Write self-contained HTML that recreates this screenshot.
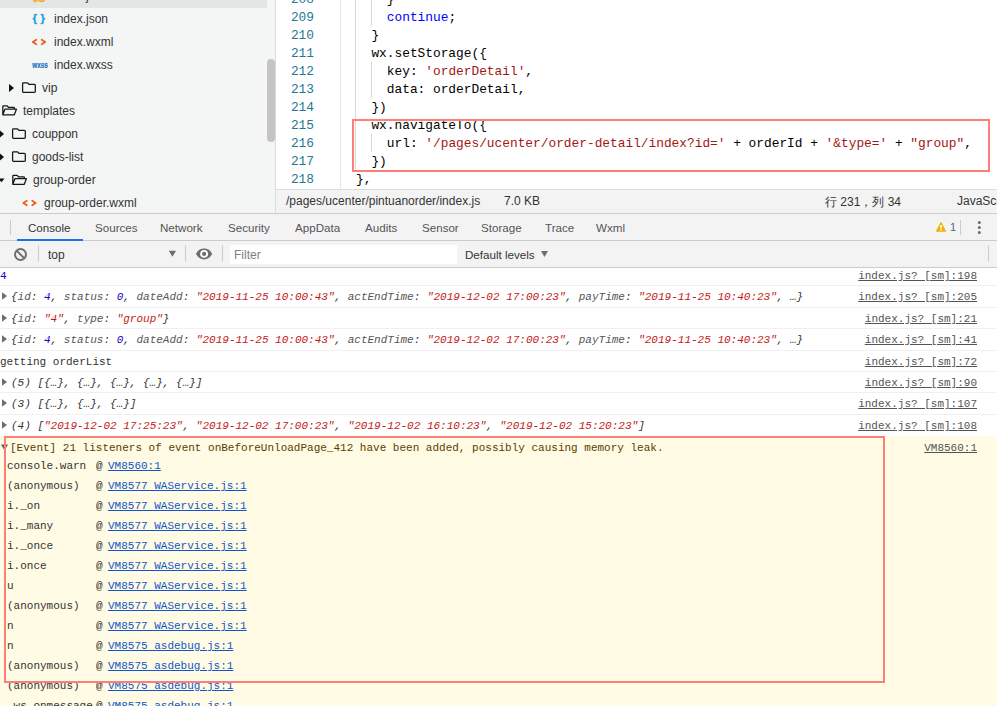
<!DOCTYPE html><html><head><meta charset="utf-8"><style>
*{margin:0;padding:0;box-sizing:border-box}
html,body{width:997px;height:706px;overflow:hidden;background:#fff;position:relative}
body{font-family:"Liberation Sans",sans-serif;font-size:12px;color:#333}
.a{position:absolute;white-space:pre}
#side{position:absolute;left:0;top:0;width:276px;height:213px;background:#f4f5f5;border-right:1px solid #dcdcdc;overflow:hidden}
#side .t{position:absolute;white-space:pre;font-size:12px;color:#333;line-height:14px}
#editor{position:absolute;left:276px;top:0;width:721px;height:189px;background:#fff;overflow:hidden}
.ln{position:absolute;left:0;width:38px;text-align:right;font-family:"Liberation Mono",monospace;font-size:12.83px;color:#237893;line-height:18px}
.cl{position:absolute;left:64.6px;font-family:"Liberation Mono",monospace;font-size:12.83px;color:#000;line-height:18px;white-space:pre}
.kw{color:#0000ff}.st{color:#a31515}
#info{position:absolute;left:276px;top:189px;width:721px;height:24px;background:#f3f3f3;border-top:1px solid #dcdcdc}
#tabs{position:absolute;left:0;top:213px;width:997px;height:28px;background:#f3f3f3;border-top:1px solid #ccc;border-bottom:1px solid #ccc}
#tabs .tb{position:absolute;top:7px;font-size:11.6px;color:#555;white-space:pre}
#tool{position:absolute;left:0;top:241px;width:997px;height:27px;background:#f3f3f3;border-bottom:1px solid #ccc}
#con{position:absolute;left:0;top:268px;width:997px;height:438px;background:#fff}
.row{position:absolute;left:0;width:997px;border-top:1px solid #f0f0f0}
.mono{font-family:"Liberation Mono",monospace;font-size:11px;line-height:13px;white-space:pre;position:absolute}
.lnk{color:#545454;text-decoration:underline}
.it{font-style:italic}
.s{color:#c41a16}.n{color:#1c00cf}.k{color:#565656}
.tri{position:absolute;width:0;height:0;border-left:5.2px solid #6e6e6e;border-top:4px solid transparent;border-bottom:4px solid transparent}
.trid{position:absolute;width:0;height:0;border-top:6px solid #5a5a5a;border-left:3.4px solid transparent;border-right:3.4px solid transparent}
#warn{position:absolute;left:0;top:436px;width:997px;height:270px;background:#fffbe5}
.stk{color:#333}
.ul{color:#1155cc;text-decoration:underline}
.red{position:absolute;border:2px solid #fd8078}
</style></head><body>
<div id="side">
<div style="position:absolute;left:0;top:0;width:267px;height:8px;background:#e4e6e6"></div>
<div style="position:absolute;left:267px;top:59px;width:8px;height:83px;background:#c4c4c4;border-radius:4px"></div>
<div class="t" style="left:54px;top:-11px">index.js</div>
<svg style="position:absolute;left:0;top:0" width="276" height="213"><text x="33" y="2.2" font-family="Liberation Sans" font-weight="bold" font-size="10" fill="#f5a623" stroke="#f5a623" stroke-width="0.3">JS</text><text x="32.6" y="22.4" font-family="Liberation Sans" font-weight="bold" font-size="11.4" fill="#1a9fe0" stroke="#1a9fe0" stroke-width="0.3">{</text><text x="40.5" y="22.4" font-family="Liberation Sans" font-weight="bold" font-size="11.4" fill="#1a9fe0" stroke="#1a9fe0" stroke-width="0.3">}</text><g fill="none" stroke="#f25b1e" stroke-width="1.7" stroke-linecap="round" stroke-linejoin="round"><path d="M36.3,39.7 L32.8,42 L36.3,44.3"/><path d="M41.7,39.7 L45.2,42 L41.7,44.3"/><path d="M26.8,200.7 L23.3,203 L26.8,205.3"/><path d="M32.2,200.7 L35.7,203 L32.2,205.3"/></g><text x="0" y="0" transform="translate(32.2,68.2) scale(0.7,1)" font-family="Liberation Sans" font-weight="bold" font-size="9.2" fill="#1a6fc4" stroke="#1a6fc4" stroke-width="0.2">wxss</text><g fill="#111"><path d="M9,84 L14,88 L9,92 Z"/><path d="M-1,131.5 L4,136 L-1,140.5 Z" transform="translate(0,-2)"/><path d="M-1,154.5 L4,159 L-1,163.5 Z" transform="translate(0,-2)"/><path d="M-1.5,178.6 L4.5,178.6 L1.5,182.2 Z"/></g><g fill="none" stroke="#151515" stroke-width="1.25" stroke-linejoin="round"><path d="M22.6,91.6 V83.6 Q22.6,82.8 23.4,82.8 H27.6 L28.9,84.4 H34.4 Q35.3,84.4 35.3,85.3 V91.6 Q35.3,92.4 34.4,92.4 H23.4 Q22.6,92.4 22.6,91.6 Z"/><path d="M12.6,137.6 V129.6 Q12.6,128.8 13.4,128.8 H17.6 L18.9,130.4 H24.4 Q25.3,130.4 25.3,131.3 V137.6 Q25.3,138.4 24.4,138.4 H13.4 Q12.6,138.4 12.6,137.6 Z"/><path d="M12.6,160.6 V152.6 Q12.6,151.8 13.4,151.8 H17.6 L18.9,153.4 H24.4 Q25.3,153.4 25.3,154.3 V160.6 Q25.3,161.4 24.4,161.4 H13.4 Q12.6,161.4 12.6,160.6 Z"/><path d="M2.8,114.8 V106.6 Q2.8,105.8 3.6,105.8 H7.2 L8.4,107.4 H13.6 Q14.4,107.4 14.4,108.2 V109.2 M2.8,114.8 L4.9,109.2 H16.4 L14.3,114.8 Z"/><path d="M12.8,184.3 V176.1 Q12.8,175.3 13.6,175.3 H17.2 L18.4,176.9 H23.6 Q24.4,176.9 24.4,177.7 V178.7 M12.8,184.3 L14.9,178.7 H26.4 L24.3,184.3 Z"/></g></svg>
<div class="t" style="left:54px;top:12px">index.json</div>
<div class="t" style="left:54px;top:35px">index.wxml</div>
<div class="t" style="left:54px;top:58px">index.wxss</div>
<div class="t" style="left:42px;top:81px">vip</div>
<div class="t" style="left:23px;top:104px">templates</div>
<div class="t" style="left:32px;top:127px">couppon</div>
<div class="t" style="left:32px;top:150px">goods-list</div>
<div class="t" style="left:33px;top:173px">group-order</div>
<div class="t" style="left:44px;top:196px">group-order.wxml</div>
</div>
<div id="editor">
<div style="position:absolute;left:64px;top:0;width:1px;height:189px;background:#e8e8e8"></div>
<div style="position:absolute;left:79px;top:0;width:1px;height:170px;background:#d8d8d8"></div>
<div style="position:absolute;left:95px;top:0;width:1px;height:26px;background:#d8d8d8"></div>
<div style="position:absolute;left:95px;top:62px;width:1px;height:36px;background:#d8d8d8"></div>
<div style="position:absolute;left:95px;top:134px;width:1px;height:18px;background:#d8d8d8"></div>
<div class="ln" style="top:-9px">208</div>
<div class="cl" style="top:-9px">      }</div>
<div class="ln" style="top:9px">209</div>
<div class="cl" style="top:9px">      <span class="kw">continue</span>;</div>
<div class="ln" style="top:27px">210</div>
<div class="cl" style="top:27px">    }</div>
<div class="ln" style="top:45px">211</div>
<div class="cl" style="top:45px">    wx.setStorage({</div>
<div class="ln" style="top:63px">212</div>
<div class="cl" style="top:63px">      key: <span class="st">'orderDetail'</span>,</div>
<div class="ln" style="top:81px">213</div>
<div class="cl" style="top:81px">      data: orderDetail,</div>
<div class="ln" style="top:99px">214</div>
<div class="cl" style="top:99px">    })</div>
<div class="ln" style="top:117px">215</div>
<div class="cl" style="top:117px">    wx.navigateTo({</div>
<div class="ln" style="top:135px">216</div>
<div class="cl" style="top:135px">      url: <span class="st">'/pages/ucenter/order-detail/index?id='</span> + orderId + <span class="st">'&amp;type='</span> + <span class="st">"group"</span>,</div>
<div class="ln" style="top:153px">217</div>
<div class="cl" style="top:153px">    })</div>
<div class="ln" style="top:171px">218</div>
<div class="cl" style="top:171px">  },</div>
</div>
<div id="info">
<div class="a" style="left:10px;top:4px">/pages/ucenter/pintuanorder/index.js</div>
<div class="a" style="left:228px;top:4px">7.0 KB</div>
<div class="a" style="left:549px;top:4px">行 231，列 34</div>
<div class="a" style="left:681px;top:4px">JavaScript</div>
</div>
<div id="tabs">
<div class="tb" style="left:28px;color:#333">Console</div>
<div class="tb" style="left:95px">Sources</div>
<div class="tb" style="left:160px">Network</div>
<div class="tb" style="left:228px">Security</div>
<div class="tb" style="left:295px">AppData</div>
<div class="tb" style="left:365px">Audits</div>
<div class="tb" style="left:422px">Sensor</div>
<div class="tb" style="left:481px">Storage</div>
<div class="tb" style="left:545px">Trace</div>
<div class="tb" style="left:596px">Wxml</div>
<div style="position:absolute;left:17px;top:25px;width:66px;height:2px;background:#1a73e8"></div>
<svg style="position:absolute;left:0;top:0" width="997" height="27"><rect x="10" y="6" width="1" height="15" fill="#ccc"/><path d="M941,8.3 L945.6,17.3 L936.4,17.3 Z" fill="#f2b200" stroke="#f2b200" stroke-width="0.9" stroke-linejoin="round"/><rect x="940.2" y="11" width="1.6" height="3.6" fill="#fff"/><rect x="940.2" y="15.4" width="1.6" height="1.2" fill="#fff"/><rect x="960" y="6" width="1" height="15" fill="#ccc"/><circle cx="979.3" cy="8.4" r="1.5" fill="#6e6e6e"/><circle cx="979.3" cy="13.5" r="1.5" fill="#6e6e6e"/><circle cx="979.3" cy="18.5" r="1.5" fill="#6e6e6e"/></svg>
<div class="tb" style="left:950px;font-size:11px;color:#5a6270">1</div>
</div>
<div id="tool">
<svg style="position:absolute;left:0;top:0" width="997" height="26"><g fill="none" stroke="#6e6e6e" stroke-width="2"><circle cx="20.5" cy="13.5" r="5.5"/><path d="M16.6,9.6 L24.4,17.4"/></g><rect x="38" y="4.5" width="1" height="16" fill="#ccc"/><path d="M168.8,9.8 L176,9.8 L172.4,15.8 Z" fill="#6e6e6e"/><rect x="185" y="4.5" width="1" height="16" fill="#ccc"/><path d="M196,12.9 C199,5.6 209.2,5.6 212.2,12.9 C209.2,20.2 199,20.2 196,12.9 Z" fill="#6e6e6e"/><circle cx="204.1" cy="12.9" r="3.9" fill="#fff"/><circle cx="204.1" cy="12.9" r="2.1" fill="#6e6e6e"/><rect x="222" y="4.5" width="1" height="16" fill="#ccc"/><rect x="230" y="4" width="227" height="19" fill="#fff"/><path d="M541,10 L548,10 L544.5,16 Z" fill="#6e6e6e"/><rect x="988" y="4.5" width="1" height="16" fill="#ccc"/></svg>
<div class="a" style="left:48px;top:7px;font-size:12px;color:#333">top</div>
<div class="a" style="left:234px;top:7px;font-size:12px;color:#808080">Filter</div>
<div class="a" style="left:465px;top:7px;font-size:11.6px;color:#333">Default levels</div>
</div>
<div id="con">
</div>
<div id="warn"></div>
<div class="row" style="top:267px;height:18px;border-top:none;padding-top:1px">
<div class="mono" style="left:0px;top:3px;color:#333"><span class="n">4</span></div>
<div class="mono lnk" style="right:20px;top:3px">index.js? [sm]:198</div>
</div>
<div class="row" style="top:285px;height:22px">
<div class="mono" style="left:11px;top:5px;color:#333"><span class="it">{<span class="k">id</span>: <span class="n">4</span>, <span class="k">status</span>: <span class="n">0</span>, <span class="k">dateAdd</span>: <span class="s">"2019-11-25 10:00:43"</span>, <span class="k">actEndTime</span>: <span class="s">"2019-12-02 17:00:23"</span>, <span class="k">payTime</span>: <span class="s">"2019-11-25 10:40:23"</span>, …}</span></div>
<div class="mono lnk" style="right:20px;top:5px">index.js? [sm]:205</div>
</div>
<div class="row" style="top:307px;height:21px">
<div class="mono" style="left:11px;top:5px;color:#333"><span class="it">{<span class="k">id</span>: <span class="s">"4"</span>, <span class="k">type</span>: <span class="s">"group"</span>}</span></div>
<div class="mono lnk" style="right:20px;top:5px">index.js? [sm]:21</div>
</div>
<div class="row" style="top:328px;height:22px">
<div class="mono" style="left:11px;top:5px;color:#333"><span class="it">{<span class="k">id</span>: <span class="n">4</span>, <span class="k">status</span>: <span class="n">0</span>, <span class="k">dateAdd</span>: <span class="s">"2019-11-25 10:00:43"</span>, <span class="k">actEndTime</span>: <span class="s">"2019-12-02 17:00:23"</span>, <span class="k">payTime</span>: <span class="s">"2019-11-25 10:40:23"</span>, …}</span></div>
<div class="mono lnk" style="right:20px;top:5px">index.js? [sm]:41</div>
</div>
<div class="row" style="top:350px;height:21px">
<div class="mono" style="left:0px;top:5px;color:#333">getting orderList</div>
<div class="mono lnk" style="right:20px;top:5px">index.js? [sm]:72</div>
</div>
<div class="row" style="top:371px;height:21px">
<div class="mono" style="left:11px;top:5px;color:#333"><span class="it">(5) [{…}, {…}, {…}, {…}, {…}]</span></div>
<div class="mono lnk" style="right:20px;top:5px">index.js? [sm]:90</div>
</div>
<div class="row" style="top:392px;height:22px">
<div class="mono" style="left:11px;top:5px;color:#333"><span class="it">(3) [{…}, {…}, {…}]</span></div>
<div class="mono lnk" style="right:20px;top:5px">index.js? [sm]:107</div>
</div>
<div class="row" style="top:414px;height:22px">
<div class="mono" style="left:11px;top:5px;color:#333"><span class="it">(4) [<span class="s">"2019-12-02 17:25:23"</span>, <span class="s">"2019-12-02 17:00:23"</span>, <span class="s">"2019-12-02 16:10:23"</span>, <span class="s">"2019-12-02 15:20:23"</span>]</span></div>
<div class="mono lnk" style="right:20px;top:5px">index.js? [sm]:108</div>
</div>
<svg style="position:absolute;left:0;top:0" width="12" height="440"><g fill="#6e6e6e"><path d="M2,292.3 L7,296.05 L2,299.8 Z"/><path d="M2,314.3 L7,318.05 L2,321.8 Z"/><path d="M2,335.3 L7,339.05 L2,342.8 Z"/><path d="M2,378.3 L7,382.05 L2,385.8 Z"/><path d="M2,399.3 L7,403.05 L2,406.8 Z"/><path d="M2,421.3 L7,425.05 L2,428.8 Z"/></g></svg>
<svg style="position:absolute;left:0;top:440px" width="12" height="14"><path d="M1,4.6 L8,4.6 L4.5,10.6 Z" fill="#5f5f5f"/></svg>
<div class="mono" style="left:10px;top:442px;color:#5c3b00">[Event] 21 listeners of event onBeforeUnloadPage_412 have been added, possibly causing memory leak.</div>
<div class="mono lnk" style="right:20px;top:442px">VM8560:1</div>
<div class="mono stk" style="left:7px;top:460px">console.warn</div>
<div class="mono stk" style="left:96px;top:460px">@</div>
<div class="mono ul" style="left:108px;top:460px">VM8560:1</div>
<div class="mono stk" style="left:7px;top:480px">(anonymous)</div>
<div class="mono stk" style="left:96px;top:480px">@</div>
<div class="mono ul" style="left:108px;top:480px">VM8577 WAService.js:1</div>
<div class="mono stk" style="left:7px;top:500px">i._on</div>
<div class="mono stk" style="left:96px;top:500px">@</div>
<div class="mono ul" style="left:108px;top:500px">VM8577 WAService.js:1</div>
<div class="mono stk" style="left:7px;top:520px">i._many</div>
<div class="mono stk" style="left:96px;top:520px">@</div>
<div class="mono ul" style="left:108px;top:520px">VM8577 WAService.js:1</div>
<div class="mono stk" style="left:7px;top:540px">i._once</div>
<div class="mono stk" style="left:96px;top:540px">@</div>
<div class="mono ul" style="left:108px;top:540px">VM8577 WAService.js:1</div>
<div class="mono stk" style="left:7px;top:560px">i.once</div>
<div class="mono stk" style="left:96px;top:560px">@</div>
<div class="mono ul" style="left:108px;top:560px">VM8577 WAService.js:1</div>
<div class="mono stk" style="left:7px;top:580px">u</div>
<div class="mono stk" style="left:96px;top:580px">@</div>
<div class="mono ul" style="left:108px;top:580px">VM8577 WAService.js:1</div>
<div class="mono stk" style="left:7px;top:600px">(anonymous)</div>
<div class="mono stk" style="left:96px;top:600px">@</div>
<div class="mono ul" style="left:108px;top:600px">VM8577 WAService.js:1</div>
<div class="mono stk" style="left:7px;top:620px">n</div>
<div class="mono stk" style="left:96px;top:620px">@</div>
<div class="mono ul" style="left:108px;top:620px">VM8577 WAService.js:1</div>
<div class="mono stk" style="left:7px;top:640px">n</div>
<div class="mono stk" style="left:96px;top:640px">@</div>
<div class="mono ul" style="left:108px;top:640px">VM8575 asdebug.js:1</div>
<div class="mono stk" style="left:7px;top:660px">(anonymous)</div>
<div class="mono stk" style="left:96px;top:660px">@</div>
<div class="mono ul" style="left:108px;top:660px">VM8575 asdebug.js:1</div>
<div class="mono stk" style="left:7px;top:680px">(anonymous)</div>
<div class="mono stk" style="left:96px;top:680px">@</div>
<div class="mono ul" style="left:108px;top:680px">VM8575 asdebug.js:1</div>
<div class="mono stk" style="left:7px;top:700px">_ws.onmessage</div>
<div class="mono stk" style="left:96px;top:700px">@</div>
<div class="mono ul" style="left:108px;top:700px">VM8575 asdebug.js:1</div>
<div class="red" style="left:4px;top:436px;width:881px;height:247px"></div>
<div class="red" style="left:352px;top:119px;width:638px;height:53px"></div>
</body></html>
